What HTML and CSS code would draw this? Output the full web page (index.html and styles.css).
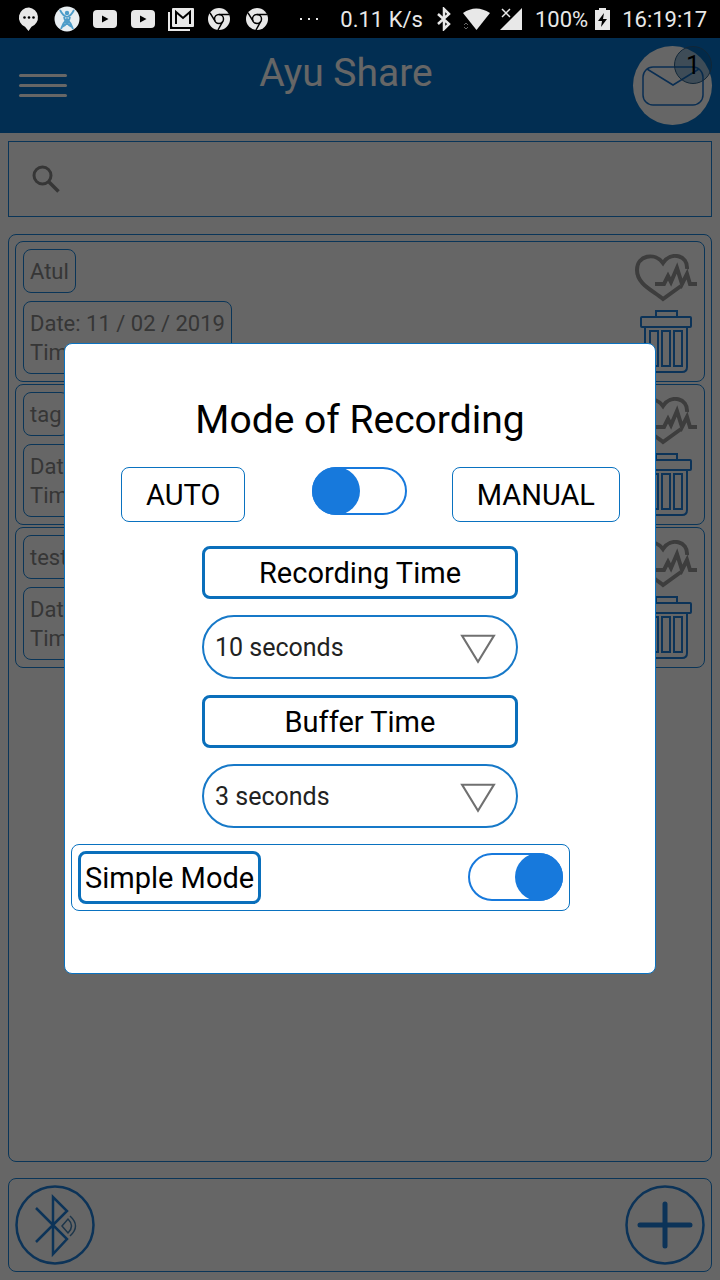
FILE: index.html
```html
<!DOCTYPE html>
<html lang="en">
<head>
<meta charset="utf-8">
<meta name="viewport" content="width=device-width, initial-scale=1">
<title>Ayu Share</title>
<link rel="stylesheet" href="styles.css">
</head>
<body>
<svg class="defs" aria-hidden="true">
  <symbol id="youtube" viewBox="0 0 26 26"><rect x="1" y="4" width="24" height="18" rx="4" fill="#e8e8e8"/><path d="M10 9.500v7l6.500-3.500z" fill="#000"/></symbol>
  <symbol id="chrome" viewBox="0 0 26 26"><circle cx="13" cy="13" r="11" fill="#e8e8e8"/><g fill="none" stroke="#000" stroke-width="1.500"><circle cx="13" cy="13" r="4.500"/><path d="M13 8.500H23.200M9.100 15.200 4 6.800M16.900 15.200 12 24"/></g></symbol>
  <symbol id="heart" viewBox="0 0 62 48"><g fill="none" stroke="#989898" stroke-width="4"><path d="M52 15C53 1 36-3 28 9C20-2 2 1 2 16C2 30 17 36 28 45L46 32"/><path d="M20 30H29L33 22L36 28L42 14L47 30L52 20L55 30H62"/></g></symbol>
  <symbol id="trash" viewBox="0 0 52 64"><g fill="none" stroke="#1e80dc" stroke-width="2"><rect x="16" y="1" width="21" height="6"/><rect x="1" y="7" width="50" height="10" rx="1"/><path d="M5 17V57Q5 62 10 62H42Q47 62 47 57V17M10 21h8v35h-8zM22 21h8v35h-8zM34 21h8v35h-8z"/></g></symbol>
</svg>

<div class="status">
  <div class="notes">
    <svg viewBox="0 0 26 26"><path d="M13 1.500a10 10 0 0 0-4 19.200L12.500 25l3-4.200A10 10 0 0 0 13 1.500z" fill="#e8e8e8"/><g fill="#000"><circle cx="8.500" cy="11.500" r="1.300"/><circle cx="13" cy="11.500" r="1.300"/><circle cx="17.500" cy="11.500" r="1.300"/></g></svg>
    <svg viewBox="0 0 26 26"><circle cx="13" cy="13" r="12.500" fill="#e8eef2"/><g fill="none" stroke="#4d9cc9" stroke-width="1.800"><path d="M6 4Q9 10 13 11Q17 10 20 4M7 23Q9 17 13 13Q17 17 19 23M10 11Q11 17 18 21M16 11Q15 17 8 21"/></g><circle cx="13" cy="7" r="2.200" fill="#4d9cc9"/></svg>
    <svg><use href="#youtube"/></svg>
    <svg><use href="#youtube"/></svg>
    <svg viewBox="0 0 26 26"><path d="M1 6V24H22" fill="none" stroke="#e8e8e8" stroke-width="2"/><rect x="4" y="2" width="22" height="19" rx="1" fill="#e8e8e8"/><path d="M8 18V6l7 6 7-6V18" fill="none" stroke="#000" stroke-width="2"/></svg>
    <svg><use href="#chrome"/></svg>
    <svg><use href="#chrome"/></svg>
  </div>
  <svg class="dots" viewBox="0 0 18 4"><g fill="#e8e8e8"><rect y="1" width="2" height="2"/><rect x="8" y="1" width="2" height="2"/><rect x="16" y="1" width="2" height="2"/></g></svg>
  <span>0.11 K/s</span>
  <svg class="bt" viewBox="0 0 16 24"><path d="M2 7l11 10-5 5V2l5 5L2 17" fill="none" stroke="#e8e8e8" stroke-width="2.500"/></svg>
  <svg class="wifi" viewBox="0 0 27 24"><path d="M0 6Q13-3 27 6L13.500 23z" fill="#e8e8e8"/><path d="M1 18l2-2 2 2M1 20l2 2 2-2" fill="none" stroke="#666"/></svg>
  <svg class="signal" viewBox="0 0 22 24"><path d="M22 1V23H0z" fill="#e8e8e8"/><path d="M2 2l8 8M10 2l-8 8" stroke="#000" stroke-width="4"/><path d="M2 2l8 8M10 2l-8 8" stroke="#e8e8e8" stroke-width="1.500"/></svg>
  <span>100%</span>
  <svg class="battery" viewBox="0 0 15 24"><path d="M4 1h7v2h4v20H0V3h4z" fill="#e8e8e8"/><path d="M9 6l-6 8h4l-1 6 6-8H8z" fill="#000"/></svg>
  <time class="clock">16:19:17</time>
</div>

<div class="app">
  <header class="bar">
    <button class="menu" aria-label="Menu"><i></i><i></i><i></i></button>
    <h1>Ayu Share</h1>
    <button class="mail" aria-label="Messages">
      <svg viewBox="0 0 79 79"><g fill="none" stroke="#1a73ce" stroke-width="1.500"><rect x="10" y="21" width="60" height="38" rx="10"/><path d="M14 23L40 39L66 23"/></g></svg>
      <span class="badge">1</span>
    </button>
  </header>

  <label class="search">
    <svg viewBox="0 0 28 28"><g fill="none" stroke="#888" stroke-width="3"><circle cx="10.500" cy="10.500" r="8.500"/><path d="M16.500 16.500L26.500 26.500" stroke-width="3.500"/></g></svg>
    <input type="search" aria-label="Search recordings">
  </label>

  <main class="list">
    <article class="card">
      <div class="info"><p class="chip">Atul</p><p class="chip">Date: 11 / 02 / 2019<br>Time:</p></div>
      <div class="actions"><button aria-label="View heartbeat"><svg class="heart"><use href="#heart"/></svg></button><button aria-label="Delete"><svg class="trash"><use href="#trash"/></svg></button></div>
    </article>
    <article class="card">
      <div class="info"><p class="chip">tag</p><p class="chip">Date:<br>Time:</p></div>
      <div class="actions"><button aria-label="View heartbeat"><svg class="heart"><use href="#heart"/></svg></button><button aria-label="Delete"><svg class="trash"><use href="#trash"/></svg></button></div>
    </article>
    <article class="card">
      <div class="info"><p class="chip">test</p><p class="chip">Date:<br>Time:</p></div>
      <div class="actions"><button aria-label="View heartbeat"><svg class="heart"><use href="#heart"/></svg></button><button aria-label="Delete"><svg class="trash"><use href="#trash"/></svg></button></div>
    </article>
  </main>

  <footer class="tools">
    <button aria-label="Bluetooth"><svg viewBox="0 0 80 80"><g fill="none" stroke="#1e80dc" stroke-width="2.500"><circle cx="40" cy="40" r="38.500"/><path d="M21 23L52 54L38 69V12L52 26L21 57"/></g><g fill="none" stroke="#4a86b8" stroke-width="1.500"><path d="M47 41L53 34Q60 41 53 48zM55 31Q66 41 55 51"/></g></svg></button>
    <button aria-label="Add"><svg viewBox="0 0 80 80"><g fill="none" stroke="#1e80dc"><circle cx="40" cy="40" r="38.500" stroke-width="2.500"/><path d="M15 40H65M40 19V61" stroke-width="5" stroke-linecap="round"/></g></svg></button>
  </footer>

  <div class="shade">
    <section class="dialog" role="dialog" aria-labelledby="dialog-title">
      <h2 id="dialog-title">Mode of Recording</h2>
      <div class="mode">
        <span class="option">AUTO</span>
        <input class="switch" type="checkbox" role="switch" aria-label="Manual recording">
        <span class="option">MANUAL</span>
      </div>
      <div class="times">
        <label class="caption" for="rec">Recording Time</label>
        <div class="picker">
          <select id="rec"><option>10 seconds</option></select>
          <svg viewBox="0 0 34 28"><path d="M2 1.500H32L17 26z" fill="none" stroke="#707070" stroke-width="2"/></svg>
        </div>
        <label class="caption" for="buf">Buffer Time</label>
        <div class="picker">
          <select id="buf"><option>3 seconds</option></select>
          <svg viewBox="0 0 34 28"><path d="M2 1.500H32L17 26z" fill="none" stroke="#707070" stroke-width="2"/></svg>
        </div>
      </div>
      <div class="simple">
        <label class="caption" for="simple">Simple Mode</label>
        <input class="switch" id="simple" type="checkbox" role="switch" checked>
      </div>
    </section>
  </div>
</div>
</body>
</html>
```
FILE: styles.css
```css
* { box-sizing: border-box; }
body {
  margin: 0;
  min-height: 100vh;
  display: flex;
  flex-direction: column;
  background: #fff;
  color: #000;
  font-family: Roboto, "Noto Sans", sans-serif;
}
h1, h2, p { margin: 0; font-weight: 400; }
button { padding: 0; border: 0; background: none; font: inherit; color: inherit; }
svg { display: block; }
.defs { position: absolute; width: 0; height: 0; }

.status {
  display: flex;
  align-items: center;
  height: 38px;
  padding: 0 13px 0 10px;
  background: #000;
  color: #e8e8e8;
  font-size: 22px;
  line-height: 36px;
  white-space: nowrap;
}
.status span, .clock { padding-top: 2px; }
.notes { display: flex; gap: 12px; padding: 0 6px; margin-right: auto; }
.notes svg { width: 26px; height: 26px; }
.dots { width: 18px; height: 4px; margin-right: 22px; }
.bt { width: 16px; height: 24px; margin: 0 11px 0 13px; }
.wifi { width: 27px; height: 24px; margin-right: 10px; }
.signal { width: 22px; height: 24px; margin-right: 13px; }
.battery { width: 15px; height: 24px; margin: 0 12px 0 7px; }

.app { position: relative; flex: 1; display: flex; flex-direction: column; padding-bottom: 8px; }
.bar {
  display: flex;
  align-items: center;
  padding: 8px 8px 8px 19px;
  background: #0774cc;
}
.menu { display: flex; flex-direction: column; gap: 7px; width: 48px; }
.menu i { height: 3px; border-radius: 2px; background: #fff; }
.bar h1 {
  flex: 1;
  align-self: flex-start;
  padding-right: 8px;
  text-align: center;
  color: #fff;
  font-size: 39px;
  line-height: 54px;
}
.mail { position: relative; width: 79px; height: 79px; border-radius: 50%; background: #fff; }
.badge {
  position: absolute;
  top: 0;
  right: 0;
  width: 38px;
  height: 38px;
  border: 1px solid #2c5f88;
  border-radius: 50%;
  background: rgba(7, 92, 160, .4);
  font-size: 25px;
  line-height: 38px;
}

.search {
  display: flex;
  align-items: center;
  height: 76px;
  margin: 8px 8px 17px;
  padding: 0 23px;
  border: 1px solid #1a86dc;
}
.search svg { width: 28px; height: 28px; }
.search input { flex: 1; min-width: 0; border: 0; outline: 0; background: none; font: inherit; font-size: 22px; }

.list {
  flex: 1;
  display: flex;
  flex-direction: column;
  gap: 2px;
  margin: 0 8px 16px;
  padding: 6px;
  border: 1px solid #1a86dc;
  border-radius: 8px;
}
.card {
  display: flex;
  justify-content: space-between;
  padding: 7px;
  border: 1px solid #1a86dc;
  border-radius: 8px;
}
.info { display: flex; flex-direction: column; align-items: flex-start; gap: 8px; }
.chip {
  padding: 7px 6px 6px;
  border: 1px solid #1a86dc;
  border-radius: 8px;
  color: #888;
  font-size: 22px;
  line-height: 29px;
}
.actions { display: flex; flex-direction: column; align-items: center; gap: 8px; padding-top: 5px; }
.heart { width: 62px; height: 48px; }
.trash { width: 52px; height: 64px; }

.tools {
  display: flex;
  justify-content: space-between;
  margin: 0 8px;
  padding: 6px;
  border: 1px solid #1a86dc;
  border-radius: 8px;
}
.tools svg { width: 80px; height: 80px; }

.shade {
  position: absolute;
  inset: 0;
  display: flex;
  align-items: center;
  padding: 0 64px 2px;
  background: rgba(0, 0, 0, .6);
}
.dialog {
  flex: 1;
  padding: 48px 6px 62px;
  border: 1px solid #0a72c0;
  border-radius: 8px;
  background: #fff;
}
.dialog h2 { text-align: center; font-size: 39px; line-height: 56px; }
.mode {
  display: grid;
  grid-template-columns: auto 1fr auto;
  justify-items: center;
  align-items: start;
  margin: 19px 29px 24px 50px;
}
.mode .switch { margin-left: 22px; }
.option {
  padding: 2px 24px 0;
  border: 1px solid #0a72c0;
  border-radius: 8px;
  font-size: 29px;
  line-height: 51px;
}
.switch {
  appearance: none;
  display: flex;
  width: 95px;
  height: 48px;
  margin: 0;
  border: 2px solid #1779dc;
  border-radius: 24px;
  background: #fff;
}
.switch::before {
  content: "";
  width: 48px;
  height: 48px;
  margin: -2px;
  border-radius: 50%;
  background: #1779dc;
}
.switch:checked::before { margin-left: auto; }
.times { display: grid; gap: 16px; padding: 0 131px; }
.caption {
  padding-top: 2px;
  border: 3px solid #0a6fbb;
  border-radius: 8px;
  text-align: center;
  font-size: 29px;
  line-height: 45px;
}
.picker { display: grid; align-items: center; }
.picker > * { grid-area: 1 / 1; }
.picker select {
  appearance: none;
  width: 100%;
  height: 64px;
  padding: 2px 64px 0 11px;
  border: 2px solid #1779c8;
  border-radius: 32px;
  background: #fff;
  color: #222;
  font: inherit;
  font-size: 25px;
}
.picker svg { justify-self: end; width: 36px; height: 30px; margin: 5px 22px 0 0; pointer-events: none; }
.simple {
  display: flex;
  align-items: center;
  justify-content: space-between;
  margin: 16px 79px 0 0;
  padding: 6px;
  border: 1px solid #0a72c0;
  border-radius: 8px;
}
.simple .caption { padding: 2px 4px 0; }
```
